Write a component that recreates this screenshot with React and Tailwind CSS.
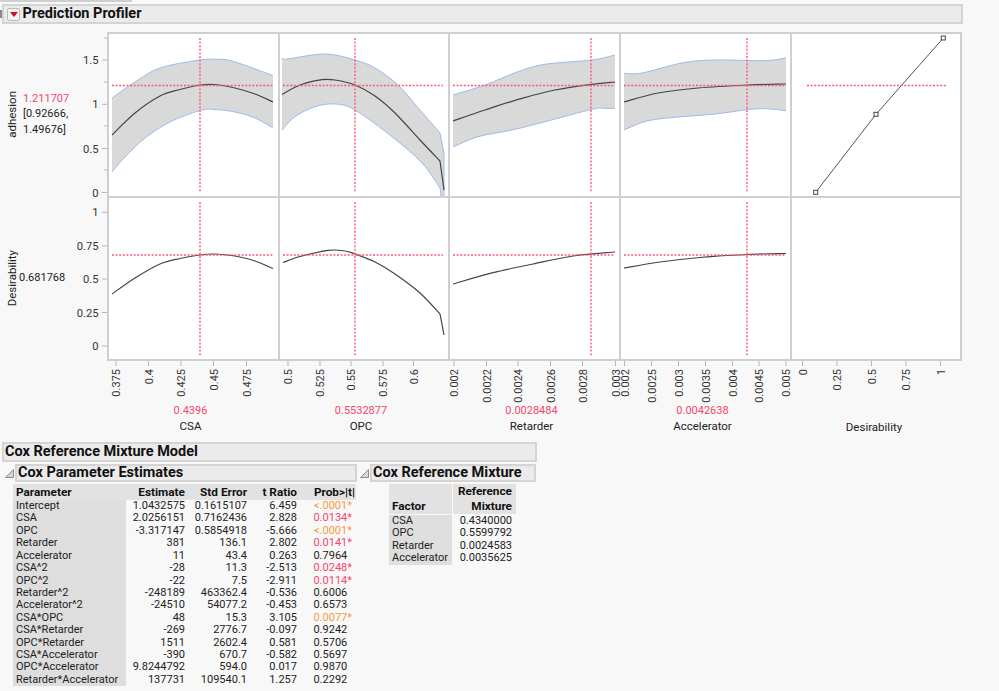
import { Fragment } from 'react'

const columns = [
  { x: 108, w: 171, red: 200, name: 'CSA', value: '0.4396', ticks: [[116, '0.375'], [148.5, '0.4'], [181, '0.425'], [213.5, '0.45'], [246.5, '0.475']] },
  { x: 279, w: 170, red: 355, name: 'OPC', value: '0.5532877', ticks: [[288, '0.5'], [320, '0.525'], [351, '0.55'], [383, '0.575'], [413.5, '0.6']] },
  { x: 449, w: 171, red: 591, name: 'Retarder', value: '0.0028484', ticks: [[454, '0.002'], [486.5, '0.0022'], [518, '0.0024'], [550.5, '0.0026'], [582.5, '0.0028'], [615.5, '0.003']] },
  { x: 620, w: 171, red: 747, name: 'Accelerator', value: '0.0042638', ticks: [[624.5, '0.002'], [651.5, '0.0025'], [678.5, '0.003'], [705.5, '0.0035'], [732.5, '0.004'], [759, '0.0045'], [786, '0.005']] },
  { x: 791, w: 172, name: 'Desirability', ticks: [[802.5, '0'], [837, '0.25'], [871.5, '0.5'], [906, '0.75'], [940.5, '1']] },
]

const bands = [
  {
    upper: [[112, 98], [135, 82], [160, 68], [200, 60], [215, 59.3], [232, 61], [273, 75.5]],
    mean: [[112, 135], [135, 113], [160, 96], [180, 89.5], [200, 85], [215, 84.5], [235, 88], [255, 94], [273, 102]],
    lower: [[112, 172], [125, 157], [145, 138], [170, 122], [200, 110.5], [215, 109.5], [235, 112], [255, 118], [273, 128]],
    hLine: [112, 273],
  },
  {
    upper: [[282, 58], [287, 59], [325, 54], [355, 60], [375, 68], [398, 85], [420, 110], [440, 133]],
    upperTail: [[444, 154], [444, 196]],
    mean: [[282, 94.5], [300, 85], [322, 79.7], [335, 80], [355, 85], [375, 96], [395, 113], [420, 140], [440, 161]],
    meanTail: [[444, 190]],
    lower: [[282, 130], [295, 116.7], [315, 106.7], [335, 104], [355, 110], [392, 136.7], [422, 163], [440, 188]],
    lowerTail: [[441, 196]],
    hLine: [283, 443],
  },
  {
    upper: [[453, 95], [485, 85], [518, 71.7], [545, 64.3], [592, 60], [615, 55]],
    mean: [[453, 121], [485, 110], [522, 98.3], [555, 90], [592, 84.3], [615, 82]],
    lower: [[453, 147], [478, 136.7], [512, 130], [545, 121.7], [592, 109.3], [605, 108.3], [615, 108.5]],
    hLine: [453, 615],
  },
  {
    upper: [[624, 73.3], [642, 73], [682, 63], [715, 60], [765, 60.7], [786, 57.7]],
    mean: [[624, 102], [658, 93], [698, 88], [748, 85], [786, 84]],
    lower: [[624, 130], [648, 120.7], [682, 116.7], [715, 114], [758, 108.7], [786, 110.7]],
    hLine: [624, 786],
  },
]

const desirability = [
  { mean: [[112, 294], [135, 278], [160, 264], [180, 258.5], [200, 255], [215, 254], [235, 256], [255, 261], [273, 268.5]] },
  { mean: [[283, 262.5], [300, 256.5], [328, 250.3], [345, 251], [355, 254], [375, 262], [395, 274], [420, 293], [440, 314]], meanTail: [[444, 335]] },
  { mean: [[453, 284], [493, 272.7], [533, 264], [573, 256], [615, 252]] },
  { mean: [[624, 268], [660, 262], [700, 257.5], [747, 254.5], [786, 253.5]] },
]

const estimates = [
  ['Intercept', '1.0432575', '0.1615107', '6.459', '<.0001', 'o'],
  ['CSA', '2.0256151', '0.7162436', '2.828', '0.0134', 'r'],
  ['OPC', '-3.317147', '0.5854918', '-5.666', '<.0001', 'o'],
  ['Retarder', '381', '136.1', '2.802', '0.0141', 'r'],
  ['Accelerator', '11', '43.4', '0.263', '0.7964'],
  ['CSA^2', '-28', '11.3', '-2.513', '0.0248', 'r'],
  ['OPC^2', '-22', '7.5', '-2.911', '0.0114', 'r'],
  ['Retarder^2', '-248189', '463362.4', '-0.536', '0.6006'],
  ['Accelerator^2', '-24510', '54077.2', '-0.453', '0.6573'],
  ['CSA*OPC', '48', '15.3', '3.105', '0.0077', 'o'],
  ['CSA*Retarder', '-269', '2776.7', '-0.097', '0.9242'],
  ['OPC*Retarder', '1511', '2602.4', '0.581', '0.5706'],
  ['CSA*Accelerator', '-390', '670.7', '-0.582', '0.5697'],
  ['OPC*Accelerator', '9.8244792', '594.0', '0.017', '0.9870'],
  ['Retarder*Accelerator', '137731', '109540.1', '1.257', '0.2292'],
]

const mixture = [
  ['CSA', '0.4340000'],
  ['OPC', '0.5599792'],
  ['Retarder', '0.0024583'],
  ['Accelerator', '0.0035625'],
]

const RED = '#ff5672'

// catmull-rom through the points, returned without the leading M
function segments(pts) {
  let d = ''
  for (let i = 0; i < pts.length - 1; i++) {
    const p0 = pts[i - 1] ?? pts[i]
    const p1 = pts[i]
    const p2 = pts[i + 1]
    const p3 = pts[i + 2] ?? p2
    const c1 = [p1[0] + (p2[0] - p0[0]) / 6, p1[1] + (p2[1] - p0[1]) / 6]
    const c2 = [p2[0] - (p3[0] - p1[0]) / 6, p2[1] - (p3[1] - p1[1]) / 6]
    d += `C${c1[0]} ${c1[1]} ${c2[0]} ${c2[1]} ${p2[0]} ${p2[1]} `
  }
  return d
}

function line(pts, tail = []) {
  const end = tail.map((p) => `L${p[0]} ${p[1]} `).join('')
  return `M${pts[0][0]} ${pts[0][1]} ${segments(pts)}${end}`
}

function area(band) {
  const low = [...band.lower].reverse()
  const lowTail = band.lowerTail ?? []
  const start = lowTail.length ? lowTail[lowTail.length - 1] : low[0]
  const toLow = lowTail.length ? `L${low[0][0]} ${low[0][1]} ` : ''
  return `${line(band.upper, band.upperTail)}L${start[0]} ${start[1]} ${toLow}${segments(low)}Z`
}

function Dotted({ x1, y1, x2, y2 }) {
  return <line x1={x1} y1={y1} x2={x2} y2={y2} stroke={RED} strokeWidth="1.4" strokeDasharray="2 1.6" />
}

function Cell({ col, top, height, last, bottom, children }) {
  const x = col.x + 1
  const y = top + 2
  const w = col.w - 2 - (last ? 2 : 0)
  const h = height - 2 - (bottom ? 2 : 0)
  return (
    <div
      className={`border-t-2 border-l-2 border-[#cfcfcf] bg-white ${last ? 'border-r-2' : ''} ${bottom ? 'border-b-2' : ''}`}
    >
      <svg className="block h-full w-full" viewBox={`${x} ${y} ${w} ${h}`} aria-hidden="true">
        {children}
      </svg>
    </div>
  )
}

function YAxis({ top, height, major, minor }) {
  return (
    <svg className="h-full w-[60px] shrink-0 overflow-visible" viewBox={`47 ${top} 60 ${height}`} aria-hidden="true">
      {minor.map((y) => (
        <line key={y} x1="104" x2="107" y1={y} y2={y} stroke="#b5b5b5" />
      ))}
      {major.map(([y, label]) => (
        <Fragment key={label}>
          <line x1="102" x2="107" y1={y} y2={y} stroke="#b5b5b5" />
          <text x="98.5" y={y + 4} textAnchor="end" fontSize="11.2" fill="#333">
            {label}
          </text>
        </Fragment>
      ))}
    </svg>
  )
}

function XAxis({ col }) {
  return (
    <svg className="block h-[42px] w-full overflow-visible" viewBox={`${col.x - 1} 361 ${col.w} 42`} aria-hidden="true">
      {col.ticks.map(([x, label]) => (
        <Fragment key={label}>
          <line x1={x} x2={x} y1="361" y2="366" stroke="#b5b5b5" />
          <text
            transform={`translate(${x + 4} 369) rotate(-90)`}
            textAnchor="end"
            fontSize="11"
            fill="#333"
          >
            {label}
          </text>
        </Fragment>
      ))}
    </svg>
  )
}

function Bar({ className, children }) {
  return (
    <div className={`flex items-center border-2 border-[#d4d4d4] bg-[#ebebeb] text-[14.5px] font-bold text-[#111] ${className}`}>
      {children}
    </div>
  )
}

function Disclosure() {
  return (
    <svg className="h-[9px] w-[9px] shrink-0" viewBox="0 0 9 9" aria-hidden="true">
      <path d="M8.5 0.5V8.5H0.5Z" fill="#d6d6d6" stroke="#8f8f8f" />
    </svg>
  )
}

function probColor(flag) {
  if (flag === 'o') return 'text-[#f59c3c]'
  if (flag === 'r') return 'text-[#f5476a]'
  return 'text-[#222]'
}

export default function App() {
  return (
    <div className="flex h-[691px] w-[999px] flex-col overflow-hidden bg-[#f8f8f8] font-['Roboto','Open_Sans',sans-serif] text-[11px] text-[#222]">
      <div className="h-[4px] shrink-0">
        <div className="h-[1.5px] w-[132px] bg-[#cfcfcf]" />
      </div>

      <div className="flex shrink-0 items-center">
        <div className="h-[8px] w-[2px] bg-[#888]" />
        <Bar className="h-[20px] w-[961px]">
          <span className="mr-[1.5px] ml-[3px] flex h-[13px] w-[13px] items-center justify-center rounded-[2px] border border-[#bbb] bg-[#f3f3f3]">
            <svg className="h-[5px] w-[8px]" viewBox="0 0 8 5" aria-hidden="true">
              <path d="M0 0H8L4 5Z" fill="#c8102e" />
            </svg>
          </span>
          <span className="ml-[1px]">Prediction Profiler</span>
        </Bar>
      </div>

      <div className="mt-[8px] grid shrink-0 grid-cols-[107px_171px_170px_171px_171px_172px] grid-rows-[164px_165px_42px]">
        <div className="flex items-center">
          <div className="flex w-[23px] shrink-0 justify-end pr-[4px]">
            <span className="rotate-180 text-[11.5px] leading-[14px] [writing-mode:vertical-rl]">adhesion</span>
          </div>
          <div className="w-[24px] shrink-0 leading-[15.5px] whitespace-nowrap">
            <div className="text-[#f5476a]">1.211707</div>
            <div>[0.92666,</div>
            <div>1.49676]</div>
          </div>
          <YAxis
            top={32}
            height={164}
            major={[[60, '1.5'], [104.3, '1'], [148.5, '0.5'], [192.5, '0']]}
            minor={[38, 82, 126, 170]}
          />
        </div>
        {bands.map((band, i) => (
          <Cell key={i} col={columns[i]} top={32} height={164}>
            <path d={area(band)} fill="#d9d9d9" />
            <path d={line(band.upper, band.upperTail)} fill="none" stroke="#9db9ee" strokeWidth="1" />
            <path d={line(band.lower, band.lowerTail)} fill="none" stroke="#9db9ee" strokeWidth="1" />
            <path d={line(band.mean, band.meanTail)} fill="none" stroke="#444" strokeWidth="1.2" />
            <Dotted x1={band.hLine[0]} x2={band.hLine[1]} y1="85.5" y2="85.5" />
            <Dotted x1={columns[i].red} x2={columns[i].red} y1="38" y2="192" />
          </Cell>
        ))}
        <Cell col={columns[4]} top={32} height={164} last>
          <path d="M815.7 192.3L876 114.3L943.3 38" fill="none" stroke="#555" strokeWidth="1" />
          <Dotted x1="807" x2="946" y1="85.5" y2="85.5" />
          {[[815.7, 192.3], [876, 114.3], [943.3, 38]].map(([x, y]) => (
            <rect key={x} x={x - 2} y={y - 2} width="4" height="4" fill="#fff" stroke="#444" strokeWidth="1" />
          ))}
        </Cell>

        <div className="flex items-center">
          <div className="flex w-[19px] shrink-0 justify-end">
            <span className="rotate-180 text-[11.5px] leading-[14px] [writing-mode:vertical-rl]">Desirability</span>
          </div>
          <div className="w-[28px] shrink-0 whitespace-nowrap">0.681768</div>
          <YAxis
            top={196}
            height={165}
            major={[[212.3, '1'], [246, '0.75'], [279, '0.5'], [312.5, '0.25'], [346, '0']]}
            minor={[]}
          />
        </div>
        {desirability.map((d, i) => (
          <Cell key={i} col={columns[i]} top={196} height={165} bottom>
            <path d={line(d.mean, d.meanTail)} fill="none" stroke="#444" strokeWidth="1.2" />
            <Dotted x1={bands[i].hLine[0]} x2={bands[i].hLine[1]} y1="255" y2="255" />
            <Dotted x1={columns[i].red} x2={columns[i].red} y1="202" y2="356" />
          </Cell>
        ))}
        <Cell col={columns[4]} top={196} height={165} last bottom />

        <div />
        {columns.map((col) => (
          <XAxis key={col.name} col={col} />
        ))}
      </div>

      <div className="grid shrink-0 grid-cols-[107px_171px_170px_171px_171px_172px] text-center leading-[16px]">
        <div />
        {columns.map((col) => (
          <div key={col.name} className="pr-[4px]">
            <div className="h-[15px] text-[#f5476a]">{col.value}</div>
            <div className={`text-[11.5px] ${col.value ? '' : 'mt-[1px]'}`}>{col.name}</div>
          </div>
        ))}
      </div>

      <Bar className="mt-[7px] ml-[2px] h-[20px] w-[535px] shrink-0 pl-[1px]">Cox Reference Mixture Model</Bar>

      <div className="mt-[2px] flex shrink-0 items-start">
        <div className="ml-[5px] w-[352px]">
          <div className="flex items-center gap-[1px]">
            <Disclosure />
            <Bar className="h-[18px] w-[342px] pl-[1px]">Cox Parameter Estimates</Bar>
          </div>
          <div className="mt-[2px] ml-[8px] w-[343px]">
            <div className="grid h-[16px] grid-cols-[113px_63px_62px_50px_55px] items-center text-[11.8px] font-bold text-[#111]">
              <div className="h-full bg-[#e2e2e2] pl-[3px] leading-[16px]">Parameter</div>
              <div className="h-full bg-[#e2e2e2] pr-[4px] text-right leading-[16px]">Estimate</div>
              <div className="h-full bg-[#e2e2e2] pr-[4px] text-right leading-[16px]">Std Error</div>
              <div className="h-full bg-[#e2e2e2] pr-[4px] text-right leading-[16px]">t Ratio</div>
              <div className="h-full bg-[#e2e2e2] pr-[1px] text-right leading-[16px]">{'Prob>|t|'}</div>
            </div>
            <div>
              {estimates.map(([name, est, err, t, prob, flag]) => (
                <div key={name} className="grid h-[12.43px] grid-cols-[113px_63px_62px_50px_55px] leading-[12.43px]">
                  <div className="bg-[#dedede] pl-[3px] whitespace-nowrap">{name}</div>
                  <div className="pr-[4px] text-right">{est}</div>
                  <div className="pr-[4px] text-right">{err}</div>
                  <div className="pr-[4px] text-right">{t}</div>
                  <div className={`pr-[4px] text-right ${probColor(flag)}`}>
                    {prob}
                    <span className={flag ? '' : 'invisible'}>*</span>
                  </div>
                </div>
              ))}
            </div>
          </div>
        </div>

        <div className="ml-[3px]">
          <div className="flex items-center gap-[1px]">
            <Disclosure />
            <Bar className="h-[18px] w-[166px] pl-[1px]">Cox Reference Mixture</Bar>
          </div>
          <div className="mt-[2px] ml-[29px] w-[127px]">
            <div className="grid h-[30px] grid-cols-[63px_64px] text-[11.8px] leading-[15px] font-bold text-[#111]">
              <div className="flex items-end bg-[#e2e2e2] pl-[3px]">Factor</div>
              <div className="border-l border-[#f8f8f8] bg-[#e2e2e2] pr-[4px] text-right">
                Reference
                <br />
                Mixture
              </div>
            </div>
            <div className="mt-[1px]">
              {mixture.map(([name, value]) => (
                <div key={name} className="grid h-[12.43px] grid-cols-[63px_64px] leading-[12.43px]">
                  <div className="bg-[#dedede] pl-[3px] whitespace-nowrap">{name}</div>
                  <div className="pr-[4px] text-right">{value}</div>
                </div>
              ))}
            </div>
          </div>
        </div>
      </div>
    </div>
  )
}
